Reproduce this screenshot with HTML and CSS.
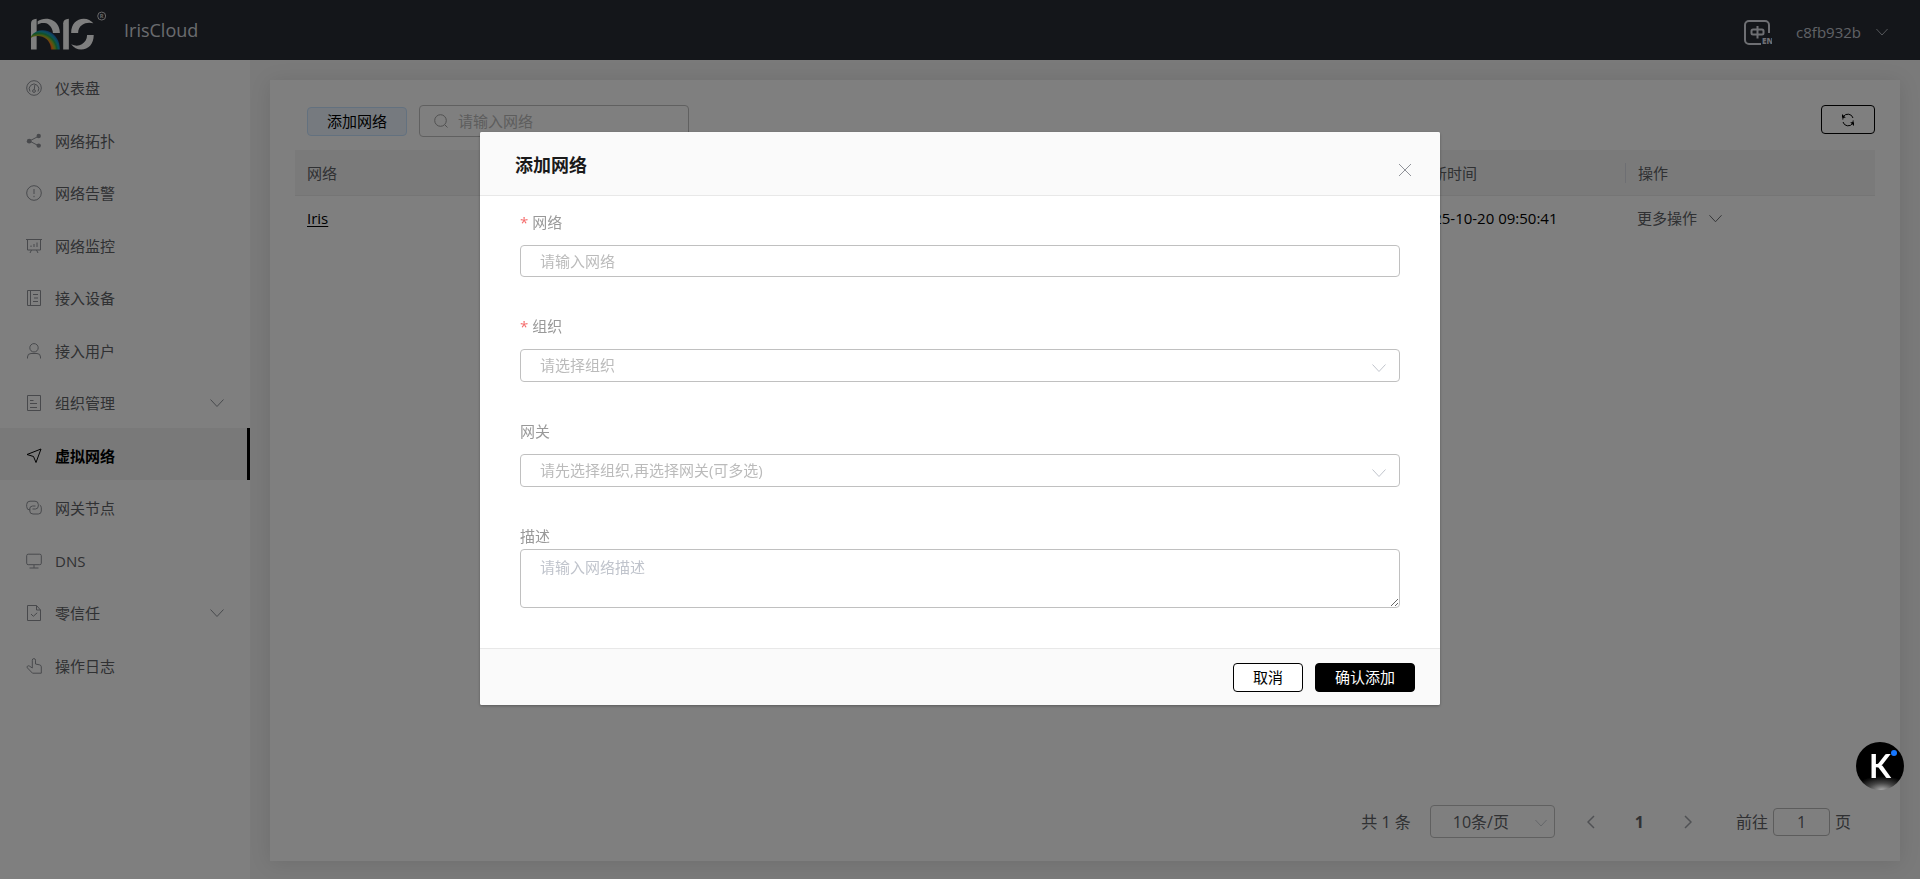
FILE: index.html
```html
<!DOCTYPE html>
<html lang="zh-CN">
  <head>
    <meta charset="utf-8" />
    <title>IrisCloud</title>
    <link rel="stylesheet" href="styles.css">
  </head>
  <body>
    <!-- shared icons -->
    <svg class="sprite" aria-hidden="true">
      <symbol id="arrow-down" viewBox="0 0 14 14">
        <path d="M0.500 3.500 7 10.500 13.500 3.500" />
      </symbol>
    </svg>

    <div class="app">
      <header class="header">
        <svg class="logo" viewBox="93 31 226 117" aria-label="Iris">
          <defs>
            <radialGradient id="rainbow" gradientUnits="userSpaceOnUse" cx="117" cy="152" r="66">
              <stop offset="0.550" stop-color="#e8341c" />
              <stop offset="0.640" stop-color="#f08a1c" />
              <stop offset="0.740" stop-color="#8fb52a" />
              <stop offset="0.820" stop-color="#23a455" />
              <stop offset="0.900" stop-color="#1ba3b8" />
              <stop offset="1" stop-color="#1d6fc0" />
            </radialGradient>
          </defs>
          <path fill="#fff" d="M93 147V68Q93 55 110 54V147z" />
          <path fill="#fff" d="M113 62C125 53 145 51 160 60C174 68 180 82 180 97H159C159 84 148 68 134 67C125 66 118 68 113 72z" />
          <path fill="url(#rainbow)" d="M93 107C105 90 125 85 145 92C168 101 180 122 180 147H153C153 125 140 110 120 107C108 105 100 107 93 112z" />
          <path fill="#fff" d="M190 147V68Q190 55 207 54V147z" />
          <path fill="#fff" d="M214 97C214 70 230 54 252 54C264 54 274 59 281 68C270 64 255 66 248 72C239 78 235 86 235 97z" />
          <path fill="#fff" d="M282 103C282 130 266 147 244 147C232 147 222 142 214 131C226 137 238 136 246 131C256 124 262 116 262 103z" />
          <circle cx="306" cy="46" r="12" fill="none" stroke="#d0d0d0" stroke-width="3" />
          <text x="306" y="52" text-anchor="middle" font-size="17" font-weight="bold" fill="#d0d0d0">R</text>
        </svg>
        <div class="brand">IrisCloud</div>
        <button class="lang" type="button" aria-label="切换语言">
          <svg viewBox="0 0 28 26">
            <path d="M25 13V5a4 4 0 0 0-4-4H5a4 4 0 0 0-4 4v15a4 4 0 0 0 4 4h12" />
            <rect x="7.500" y="9.500" width="12" height="5" rx="1.500" />
            <path d="M13.500 6v12.500" />
            <text x="18" y="24">EN</text>
          </svg>
        </button>
        <button class="user" type="button">
          c8fb932b
          <svg class="arrow"><use href="#arrow-down" /></svg>
        </button>
      </header>

      <div class="body">
        <nav class="sidebar">
          <a class="menu-item" href="#">
            <svg viewBox="0 0 16 16"><circle cx="8" cy="8" r="7.300" /><path d="M4 11.500A4.800 4.800 0 1 1 12 11.500M8.800 5 8.300 9.500" /><circle cx="8" cy="11" r="1.400" /></svg>
            <span>仪表盘</span>
          </a>
          <a class="menu-item" href="#">
            <svg viewBox="0 0 16 16"><path d="M13 3 3.500 8 13 13" /><g class="solid"><circle cx="12.700" cy="3" r="2.200" /><circle cx="3.200" cy="8.200" r="2.400" /><circle cx="12.700" cy="12.600" r="2.200" /></g></svg>
            <span>网络拓扑</span>
          </a>
          <a class="menu-item" href="#">
            <svg viewBox="0 0 16 16"><circle cx="8" cy="8" r="7.300" /><path d="M8 4v5M8 10.800v1.400" /></svg>
            <span>网络告警</span>
          </a>
          <a class="menu-item" href="#">
            <svg viewBox="0 0 16 16"><path d="M0 1.500h16M1.500 1.500v10.500h13V1.500M5.500 12 4 15M10.500 12 12 15M5 9V7.500M8 9V6M11 9V4.500" /></svg>
            <span>网络监控</span>
          </a>
          <a class="menu-item" href="#">
            <svg viewBox="0 0 16 16"><path d="M1.500 0.500h13v15h-13zM4.500 0.500v15M7 4.500h5M8 8h4M7 11.500h5" /></svg>
            <span>接入设备</span>
          </a>
          <a class="menu-item" href="#">
            <svg viewBox="0 0 16 16"><circle cx="8" cy="4.800" r="4.200" /><path d="M1.500 15.500V14a3.500 3.500 0 0 1 3.500-3.500h6A3.500 3.500 0 0 1 14.500 14v1.500" /></svg>
            <span>接入用户</span>
          </a>
          <a class="menu-item" href="#">
            <svg viewBox="0 0 16 16"><path d="M1.500 0.500h13v15h-13zM4 5.500h3.500M4 8.500h7M4 12.500h7" /></svg>
            <span>组织管理</span>
            <svg class="arrow"><use href="#arrow-down" /></svg>
          </a>
          <a class="menu-item active" href="#">
            <svg viewBox="0 0 16 16"><path d="M15 1 1 6.500 7.500 8.500 10 14.500z" /></svg>
            <span>虚拟网络</span>
          </a>
          <a class="menu-item" href="#">
            <svg viewBox="0 0 16 16"><path d="M4.500 10H4A3.300 3.300 0 0 1 0.700 6.700V4.500A3.300 3.300 0 0 1 4 1.200h5a3.300 3.300 0 0 1 3.300 3.300V6A3 3 0 0 1 9.500 9H6.500" /><path d="M13.700 5a3 3 0 0 1 1.600 2.800V11a3 3 0 0 1-3 3H7a3.300 3.300 0 0 1-3.300-3.300V9A3 3 0 0 1 6.500 6H9.500" /></svg>
            <span>网关节点</span>
          </a>
          <a class="menu-item" href="#">
            <svg viewBox="0 0 16 16"><rect x="0.700" y="1.200" width="14.600" height="10.500" rx="1.500" /><path d="M8 12v3M3.500 15h9" /></svg>
            <span>DNS</span>
          </a>
          <a class="menu-item" href="#">
            <svg viewBox="0 0 16 16"><path d="M10.500 0.500h-9v15h13V5zM10.500 0.500V5h4M5 9l2.300 2.300L11.200 7.800" /></svg>
            <span>零信任</span>
            <svg class="arrow"><use href="#arrow-down" /></svg>
          </a>
          <a class="menu-item" href="#">
            <svg viewBox="0 0 16 16"><path d="M6.300 10V2.200a1.600 1.600 0 0 1 3.200 0V6l4.200 0.900a2 2 0 0 1 1.600 2V15.200H6.500L1.300 9.800C0.500 8.500 2 7.200 3.300 8L6.300 10" /></svg>
            <span>操作日志</span>
          </a>
        </nav>

        <main class="main">
          <section class="card">
            <div class="toolbar">
              <button class="btn btn-light" type="button">添加网络</button>
              <label class="search">
                <svg viewBox="0 0 14 14"><circle cx="6.500" cy="6.500" r="5.800" /><path d="M10.800 10.800 13.500 13.500" /></svg>
                <input type="text" placeholder="请输入网络" aria-label="搜索网络" />
              </label>
              <button class="btn refresh" type="button" aria-label="刷新">
                <svg viewBox="0 0 14 14"><path d="M2.500 3.500A5.300 5.300 0 0 1 12 5M12.200 7.500a5.300 5.300 0 0 1-0.700 2.500M11.500 10.500A5.300 5.300 0 0 1 2 9M1.800 6.500A5.300 5.300 0 0 1 2.500 4" /><path class="solid" d="M1 1v3.800h3.800zM13 13V9.200H9.200z" /></svg>
              </button>
            </div>

            <table class="table">
              <colgroup>
                <col />
                <col class="col-time" />
                <col class="col-action" />
              </colgroup>
              <thead>
                <tr>
                  <th><div>网络</div></th>
                  <th><div>更新时间</div></th>
                  <th><div>操作</div></th>
                </tr>
              </thead>
              <tbody>
                <tr>
                  <td><a href="#">Iris</a></td>
                  <td>2025-10-20 09:50:41</td>
                  <td>
                    <button class="more" type="button">
                      更多操作
                      <svg class="arrow"><use href="#arrow-down" /></svg>
                    </button>
                  </td>
                </tr>
              </tbody>
            </table>

            <div class="pagination">
              <span>共 1 条</span>
              <div class="select page-size">
                <select aria-label="每页条数">
                  <option>10条/页</option>
                </select>
                <svg class="arrow"><use href="#arrow-down" /></svg>
              </div>
              <div class="pager">
                <button type="button" aria-label="上一页">
                  <svg viewBox="0 0 8 14"><path d="M7 1 1 7l6 6" /></svg>
                </button>
                <button class="current" type="button">1</button>
                <button type="button" aria-label="下一页">
                  <svg viewBox="0 0 8 14"><path d="M1 1l6 6-6 6" /></svg>
                </button>
              </div>
              <label class="jump">前往<input type="text" value="1" />页</label>
            </div>
          </section>
        </main>
      </div>
    </div>

    <div class="overlay">
      <div class="modal" role="dialog" aria-modal="true" aria-labelledby="modal-title">
        <div class="modal-header">
          <h2 id="modal-title">添加网络</h2>
          <button class="close" type="button" aria-label="关闭">
            <svg viewBox="0 0 14 14"><path d="M1 1l12 12M13 1 1 13" /></svg>
          </button>
        </div>
        <form class="modal-body">
          <div class="field">
            <label class="required" for="net-name">网络</label>
            <input id="net-name" type="text" placeholder="请输入网络" />
          </div>
          <div class="field">
            <label class="required" for="net-org">组织</label>
            <div class="select">
              <select id="net-org">
                <option value="">请选择组织</option>
              </select>
              <svg class="arrow"><use href="#arrow-down" /></svg>
            </div>
          </div>
          <div class="field">
            <label for="net-gateway">网关</label>
            <div class="select">
              <select id="net-gateway">
                <option value="">请先选择组织,再选择网关(可多选)</option>
              </select>
              <svg class="arrow"><use href="#arrow-down" /></svg>
            </div>
          </div>
          <div class="field">
            <label class="tight" for="net-desc">描述</label>
            <textarea id="net-desc" rows="2" placeholder="请输入网络描述"></textarea>
          </div>
        </form>
        <div class="modal-footer">
          <button class="btn" type="button">取消</button>
          <button class="btn btn-primary" type="button">确认添加</button>
        </div>
      </div>
    </div>

    <button class="assistant" type="button">K<span class="dot"></span></button>
  </body>
</html>
```

FILE: styles.css
```css
* {
  box-sizing: border-box;
}

body {
  margin: 0;
  font-family: "Open Sans", "Noto Sans CJK SC", sans-serif;
  font-size: 15px;
  line-height: 1.5;
  color: #000;
  background: #f4f4f4;
}

button,
input,
select,
textarea {
  font: inherit;
  color: inherit;
}

button {
  padding: 0;
  border: none;
  background: none;
  cursor: pointer;
}

svg {
  display: block;
  flex: none;
  fill: none;
  stroke: currentColor;
}

svg text {
  stroke: none;
}

.sprite {
  position: absolute;
  width: 0;
  height: 0;
}

.solid {
  fill: currentColor;
  stroke: none;
}

.arrow {
  width: 14px;
  height: 14px;
}

.app {
  display: flex;
  flex-direction: column;
  min-height: 100vh;
}

/* header */
.header {
  display: flex;
  align-items: center;
  height: 60px;
  padding: 0 32px 0 31px;
  background: #292c34;
  color: #c0c4cc;
}

.logo {
  width: 75px;
  height: 39px;
  margin-right: 18px;
  stroke: none;
}

.brand {
  flex: 1;
  font-size: 18px;
  color: #d4d7de;
}

.lang {
  margin-right: 24px;
  color: #dcdfe6;
}

.lang svg {
  width: 28px;
  height: 26px;
  margin-top: 6px;
  stroke-width: 2;
}

.lang text {
  font-size: 8px;
  font-weight: 800;
  fill: currentColor;
}

.user {
  display: flex;
  align-items: center;
  gap: 15px;
  padding-top: 4px;
}

.user .arrow {
  width: 12px;
  height: 12px;
}

.body {
  flex: 1;
  display: flex;
}

/* sidebar */
.sidebar {
  width: 250px;
  flex: none;
  background: #fff;
}

.menu-item {
  display: flex;
  align-items: center;
  gap: 13px;
  padding: 17px 26px 13px;
  color: #606266;
  text-decoration: none;
}

.menu-item svg {
  width: 16px;
  height: 16px;
  color: #909399;
}

.menu-item .arrow {
  width: 14px;
  height: 14px;
  margin-left: auto;
}

.menu-item.active {
  border-right: 3px solid #000;
  background: #f2f2f2;
  color: #000;
  font-weight: bold;
}

.menu-item.active svg {
  color: #000;
}

/* content */
.main {
  flex: 1;
  display: flex;
  padding: 20px 20px 18px;
}

.card {
  flex: 1;
  display: flex;
  flex-direction: column;
  padding: 25px 25px 23px;
  background: #fff;
  box-shadow: 0 2px 20px rgba(0, 0, 0, 0.1);
}

.toolbar {
  display: flex;
  align-items: center;
  margin-bottom: 13px;
  padding-left: 12px;
}

.btn {
  height: 29px;
  padding: 0 19px;
  border: 1px solid #000;
  border-radius: 4px;
  background: #fff;
  line-height: 22px;
}

.btn-light {
  border-color: #c6e2ff;
  background: #ecf5ff;
}

.btn-primary {
  background: #000;
  color: #fff;
}

.search {
  display: flex;
  align-items: center;
  gap: 10px;
  width: 270px;
  height: 32px;
  margin-left: 12px;
  padding: 0 14px;
  border: 1px solid #c0c0c0;
  border-radius: 4px;
  color: #a0a0a0;
}

.search svg {
  width: 14px;
  height: 14px;
}

.search input {
  width: 100%;
  min-width: 0;
  padding: 0;
  border: none;
  outline: none;
  background: none;
}

::placeholder {
  color: #bbb;
  opacity: 1;
}

.refresh {
  align-self: flex-start;
  margin-left: auto;
  background: none;
}

.refresh svg {
  width: 14px;
  height: 14px;
}

.table {
  width: 100%;
  table-layout: fixed;
  border-collapse: collapse;
}

.col-time {
  width: 221px;
}

.col-action {
  width: 250px;
}

.table th {
  height: 45px;
  padding: 1px 0 0;
  border-bottom: 1px solid #ebebeb;
  background: #f5f5f5;
  color: #606266;
  font-weight: normal;
  text-align: left;
}

.table th div {
  padding-left: 12px;
  line-height: 20px;
}

.table th + th div {
  border-left: 1px solid #dcdfe6;
}

.table td {
  height: 46px;
  padding: 0 12px;
}

.table a {
  color: #000;
  text-underline-offset: 2px;
}

.more {
  display: flex;
  align-items: center;
  gap: 12px;
  color: #606266;
}

.more .arrow {
  width: 13px;
  height: 13px;
}

/* pagination */
.pagination {
  display: flex;
  align-items: center;
  justify-content: flex-end;
  margin-top: auto;
  padding-right: 24px;
  font-size: 16px;
  color: #606266;
}

.page-size {
  width: 125px;
  margin: 0 32px 0 19px;
}

.page-size .arrow {
  width: 12px;
  height: 12px;
}

.pager {
  display: flex;
  align-items: center;
  gap: 40px;
  margin-right: 44px;
}

.pager button {
  color: #a0a3a9;
}

.pager svg {
  width: 8px;
  height: 14px;
  stroke-width: 1.500;
}

.pager .current {
  color: #606266;
  font-weight: bold;
}

.jump {
  display: flex;
  align-items: center;
  gap: 5px;
}

.jump input {
  width: 57px;
  height: 28px;
  padding: 0;
  border: 1px solid #b8b8b8;
  border-radius: 4px;
  background: none;
  text-align: center;
}

/* select */
.select {
  position: relative;
}

.select select {
  display: block;
  width: 100%;
  height: 33px;
  padding: 0 40px 0 19px;
  border: 1px solid #c0c0c0;
  border-radius: 4px;
  background: none;
  appearance: none;
  color: #bbb;
}

.select .arrow {
  position: absolute;
  top: 12px;
  right: 14px;
  color: #c0c4cc;
  pointer-events: none;
}

.page-size select {
  padding: 0 0 0 22px;
  color: #606266;
}

.page-size .arrow {
  right: 8px;
}

/* modal */
.overlay {
  position: fixed;
  inset: 0;
  overflow: auto;
  background: rgba(0, 0, 0, 0.5);
}

.modal {
  width: 50%;
  margin: 15vh auto 50px;
  border-radius: 2px;
  overflow: hidden;
  background: #fff;
  box-shadow: 0 1px 3px rgba(0, 0, 0, 0.3);
}

.modal-header {
  display: flex;
  align-items: center;
  justify-content: space-between;
  height: 64px;
  padding: 4px 28px 0 35px;
  border-bottom: 1px solid #e8e8e8;
  background: #fafafa;
}

.modal-header h2 {
  margin: 0;
  font-size: 18px;
  line-height: 24px;
  color: #1a1a1a;
}

.close {
  padding-top: 10px;
  color: #909399;
}

.close svg {
  width: 14px;
  height: 14px;
}

.modal-body {
  display: flex;
  flex-direction: column;
  gap: 23px;
  padding: 0 40px 40px;
}

.field label {
  display: block;
  padding: 15px 0 12px;
  line-height: 22px;
  color: #999;
}

.field .tight {
  padding-bottom: 2px;
}

.field .required::before {
  content: "*";
  margin-right: 4px;
  color: #f56c6c;
}

.field input,
.field textarea {
  display: block;
  width: 100%;
  padding: 0 19px;
  border: 1px solid #c0c0c0;
  border-radius: 4px;
}

.field input {
  height: 32px;
}

.field textarea {
  height: 59px;
  padding-top: 6px;
  line-height: 22px;
  resize: vertical;
}

.field textarea::placeholder {
  color: #c0c4cc;
}

.modal-footer {
  display: flex;
  justify-content: flex-end;
  gap: 12px;
  padding: 14px 25px 13px;
  border-top: 1px solid #e8e8e8;
  background: #fafafa;
}

/* floating assistant */
.assistant {
  position: fixed;
  right: 16px;
  bottom: 89px;
  width: 48px;
  height: 48px;
  border-radius: 50%;
  background: radial-gradient(ellipse 28px 14px at 54% 100%, #aaa, #444 50%, #000);
  color: #fff;
  font-family: Lato, sans-serif;
  font-size: 32px;
  font-weight: bold;
}

.dot {
  position: absolute;
  top: 8px;
  right: 7px;
  width: 6px;
  height: 6px;
  border-radius: 50%;
  background: #1677ff;
}
```
